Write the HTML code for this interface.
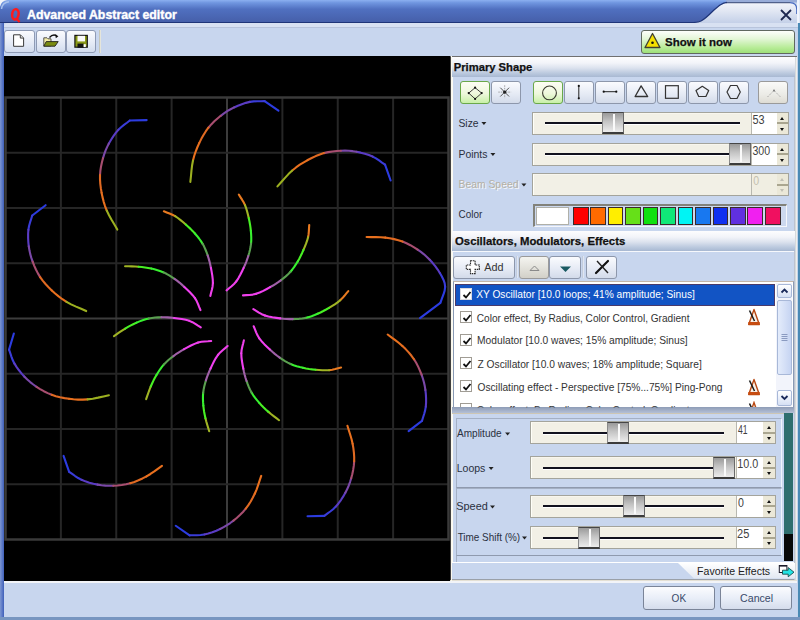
<!DOCTYPE html>
<html><head><meta charset="utf-8">
<style>
*{box-sizing:border-box}
html,body{margin:0;padding:0}
body{width:800px;height:620px;overflow:hidden;position:relative;background:#c8d6ee;font-family:"Liberation Sans",sans-serif;font-size:11px;color:#222}
.a{position:absolute}
#lframe{left:0;top:0;width:4px;height:620px;background:linear-gradient(90deg,#7d96d0 0,#5f7cc8 2px,#3f5fb8 4px)}
#bframe{left:0;top:617px;width:800px;height:3px;background:#7896c0}
#rframe{left:797px;top:23px;width:3px;height:597px;background:linear-gradient(90deg,#c4d4ec 0,#c4d4ec 1.5px,#4a8ab4 1.5px)}
#title{left:0;top:0;width:800px;height:23px}
.tb{position:absolute;top:30px;width:30px;height:23px;border:1px solid #8e9ab4;border-radius:3px;background:linear-gradient(#fafbfe,#e4eaf6 60%,#d2dcee)}
#canvas{left:4px;top:56px;width:446px;height:525px;background:#000}
#panel{left:450px;top:56px;width:347px;height:524px;background:#c8d6ee;border-left:1px solid #6a6a6a}
.hdr{position:absolute;left:451px;width:344px;height:20px;background:linear-gradient(#fdfdfe 0,#f2f4f9 30%,#dce2ee 55%,#bccadf 80%,#a8b8d2 100%);font-weight:bold;font-size:11.5px;color:#111;padding-left:3px;line-height:20px}
.btn{position:absolute;height:23px;width:30px;border:1px solid #8d97ab;border-radius:3px;background:linear-gradient(#fafbfe,#e6ebf5 55%,#d3dbea)}
.btn.sel{border-color:#6aa84a;background:linear-gradient(#fdfdf4,#eef8dc 55%,#c8f0a8)}
.btn.dis{background:linear-gradient(#fafaf8,#ebebe6 60%,#dedcd4);border-color:#9a9a9a}
.btn svg{position:absolute;left:0;top:0}
.lbl{position:absolute;font-size:11.5px;color:#2a2a3a;white-space:nowrap}
.lbl.dis{color:#a8aab8;text-shadow:1px 1px 0 #f4f6fb}
.dd{display:inline-block;width:0;height:0;border-left:3px solid transparent;border-right:3px solid transparent;border-top:3px solid #222;margin-left:3px;vertical-align:2px}
.lbl.dis .dd{border-top-color:#a8aab8}
.sbox{position:absolute;border:1px solid #a4a49c;background:#f2f0e6}
.strack-area{position:absolute;background:#f2f0e6;border-left:1px solid #fffff8;border-top:1px solid #f8f6ee}
.track{position:absolute;height:3px;background:#11111e;border-bottom:1px solid #fff}
.thumb{position:absolute;width:22px;height:22px;border-top:1.5px solid #464646;border-bottom:2px solid #3c3c3c;border-left:1px solid #8a8a8a;border-right:1px solid #6a6a6a;background:linear-gradient(#9a9a9a,#c4c4c4 45%,#ececec)}
.thumb i{position:absolute;left:9.5px;top:1px;width:2px;height:17px;background:#fafafa}
.field{position:absolute;background:#fff;border-left:1px solid #b8b8b0;font-size:12px;color:#3a3a3a;padding-left:2px;line-height:13px;padding-top:2px}
.field.dis{background:#f0eee2;color:#b8b8b0}
.spin{position:absolute;background:#ebe8d8}
.spin b{position:absolute;left:0;width:100%;height:50%}
.spin b.up{top:0;height:calc(50% + 1px);border-bottom:2px solid #aaa690}
.spin b.dn{top:calc(50% + 1px)}
.spin b.up:after,.spin b.dn:after{content:"";position:absolute;left:3.5px;border-left:2.5px solid transparent;border-right:2.5px solid transparent}
.spin b.up:after{top:4px;border-bottom:3px solid #111}
.spin b.dn:after{top:3.5px;border-top:3px solid #111}
.spin.dis b.up:after{border-bottom-color:#c0beb4}
.spin.dis b.dn:after{border-top-color:#c0beb4}
.sw{position:absolute;top:207.4px;width:15.7px;height:17.2px;border:1px solid #3a2a2a}
.row{position:absolute;left:455px;width:320px;height:23px;font-size:11.5px;color:#333;line-height:23px;padding-left:20px;white-space:nowrap}
.row.sel{background:#1254c4;color:#fff;border:1px solid #4a3a6a}
.row.sel .cb{left:3.5px;top:3.5px;border-color:#d8d8e0}
.cb{position:absolute;left:4.5px;top:4.5px;width:12px;height:12px;border:1px solid #a09c94;background:#fff}
.cb svg{position:absolute;left:1px;top:1px}
.okb{position:absolute;top:586px;height:24px;border:1px solid #7a8498;border-radius:3px;background:linear-gradient(#fbfcfe,#e9eef8 50%,#d5ddec);font-size:12.5px;color:#3a4a6a;text-align:center;line-height:22px}
</style></head><body>
<div class="a" id="lframe"></div>
<div class="a" id="rframe"></div>
<div class="a" id="bframe"></div>

<!-- title bar -->
<svg class="a" id="title" width="800" height="23" viewBox="0 0 800 23">
<defs>
<linearGradient id="tg" x1="0" y1="0" x2="0" y2="1">
<stop offset="0" stop-color="#8cb0f0"/><stop offset="0.12" stop-color="#7096e0"/><stop offset="0.4" stop-color="#5070c0"/><stop offset="1" stop-color="#455ea8"/>
</linearGradient>
<linearGradient id="tl" x1="0" y1="0" x2="0" y2="1">
<stop offset="0" stop-color="#f2f4fa"/><stop offset="0.35" stop-color="#e4e9f4"/><stop offset="1" stop-color="#c4d0e8"/>
</linearGradient>
</defs>
<rect x="0" y="0" width="800" height="23" fill="#c8d6ee"/>
<rect x="0" y="0" width="800" height="2.5" fill="#98acd8"/>
<path d="M690,23 L800,23 L800,0 L797,0 L797,23 Z" fill="#dfe8f6"/>
<path d="M726,2.6 L790,2.6 Q796.8,2.6 796.8,9.5 L796.8,23 L690,23 Z" fill="url(#tl)"/>
<path d="M726,2.6 L790,2.6" stroke="#50608a" stroke-width="1.1"/>
<path d="M790,2.6 Q796.8,2.6 796.8,9.5 L796.8,14" fill="none" stroke="#4a6cc0" stroke-width="1.3"/>
<path d="M798,0 L798,23" stroke="#f0f4fc" stroke-width="2"/>
<path d="M0,23 L0,7 Q0,0 9,0 L726,0 L726,2.4 C722,2.8 719,5.5 714,10 C709,15 705,19 701,21 C698,22.3 695,22.6 690,22.6 L0,22.6 Z" fill="url(#tg)"/>
<path d="M727,2.4 C722,2.8 719,5.5 714,10 C709,15 705,19 701,21 C698,22.3 695,22.6 690,22.6 L0,22.6" fill="none" stroke="#1f3578" stroke-width="1.2"/>
<path d="M0,0 L7,0 Q1.5,0.8 0,6.5 Z" fill="#f4f6fa"/><path d="M1.5,9 Q2.2,2.5 9,1.8" fill="none" stroke="#a8c0ec" stroke-width="1.4"/>
<ellipse cx="15.4" cy="14.3" rx="3.2" ry="5.2" fill="none" stroke="#ff1a1a" stroke-width="2.5" transform="rotate(8 15.4 14.3)"/><path d="M16.5,18.8 L19.6,22" stroke="#ff1a1a" stroke-width="2.2"/>
<path d="M781,10 L791,20 M791,10 L781,20" stroke="#1e2850" stroke-width="1.8"/>
</svg>

<!-- toolbar -->
<div class="a" style="left:4px;top:23px;width:794px;height:5px;background:#d8e1f2;border-bottom:1px solid #b8c4dc;border-top-left-radius:4px"></div>
<div class="tb" style="left:4px;top:30.3px;width:30.5px"><svg width="30" height="23"><path d="M8.6,3.8 L15.4,3.8 L18.6,7 L18.6,15.3 L8.6,15.3 Z" fill="#fff" stroke="#3a3a3a" stroke-width="1"/><path d="M15.3,4 L15.3,7.1 L18.4,7.1" fill="#d8d8d8" stroke="#3a3a3a" stroke-width="0.9"/></svg></div>
<div class="tb" style="left:35.5px;top:30.3px;width:30px"><svg width="30" height="23"><path d="M6.8,6.8 L10,6.8 L11,7.8 L14,7.8 L14,15 L6.8,15 Z" fill="#f4eca8" stroke="#444" stroke-width="0.9"/><path d="M9.2,10.6 L21.2,10.6 L18,15.2 L6.8,15.2 Z" fill="#7a8c12" stroke="#222" stroke-width="0.9"/><path d="M12.5,6.5 Q15.5,2.8 19.6,4.6" fill="none" stroke="#111" stroke-width="1.3"/><path d="M18.2,3.2 L21.4,5.2 L18.8,7.2 Z" fill="#111"/></svg></div>
<div class="tb" style="left:66px;top:30.3px;width:30px"><svg width="30" height="23"><rect x="7.3" y="3.8" width="13.6" height="13" fill="#141414"/><rect x="8.5" y="5" width="11.2" height="10.6" fill="#8a9a18"/><rect x="10.5" y="4.8" width="7.5" height="5.6" fill="#fafafa"/><rect x="10.5" y="12.6" width="6.2" height="4.2" fill="#141414"/><rect x="16.6" y="13.2" width="2.2" height="2.8" fill="#fff"/></svg></div>
<div class="a" style="left:98.5px;top:30px;width:2px;height:23px;background:linear-gradient(90deg,#b8b8a8,#f4f4ec)"></div>

<!-- show it now -->
<div class="a" style="left:640.5px;top:30px;width:154px;height:23.5px;border:1px solid #606860;border-radius:3px;background:linear-gradient(#fdfefb 0,#e4f6d8 35%,#b8ec98 75%,#9ee07a 100%)"></div>
<svg class="a" style="left:644px;top:32px" width="18" height="18"><path d="M8.5,1.5 L16,15.5 L1,15.5 Z" fill="#f4e000" stroke="#404030" stroke-width="1.3" stroke-linejoin="round"/><circle cx="8.5" cy="10.8" r="1.3" fill="#111"/></svg>

<!-- canvas -->
<div class="a" id="canvas"></div>
<svg class="a" style="left:0;top:0" width="450" height="580" viewBox="0 0 450 580">
<g><line x1="60.88" y1="97.5" x2="60.88" y2="539.5" stroke="#262626" stroke-width="2"/>
<line x1="116.25" y1="97.5" x2="116.25" y2="539.5" stroke="#262626" stroke-width="2"/>
<line x1="171.62" y1="97.5" x2="171.62" y2="539.5" stroke="#262626" stroke-width="2"/>
<line x1="227.00" y1="97.5" x2="227.00" y2="539.5" stroke="#3c3c3c" stroke-width="2"/>
<line x1="282.38" y1="97.5" x2="282.38" y2="539.5" stroke="#262626" stroke-width="2"/>
<line x1="337.75" y1="97.5" x2="337.75" y2="539.5" stroke="#262626" stroke-width="2"/>
<line x1="393.12" y1="97.5" x2="393.12" y2="539.5" stroke="#262626" stroke-width="2"/>
<line x1="5.5" y1="152.75" x2="448.5" y2="152.75" stroke="#262626" stroke-width="2"/>
<line x1="5.5" y1="208.00" x2="448.5" y2="208.00" stroke="#262626" stroke-width="2"/>
<line x1="5.5" y1="263.25" x2="448.5" y2="263.25" stroke="#262626" stroke-width="2"/>
<line x1="5.5" y1="318.50" x2="448.5" y2="318.50" stroke="#3c3c3c" stroke-width="2"/>
<line x1="5.5" y1="373.75" x2="448.5" y2="373.75" stroke="#262626" stroke-width="2"/>
<line x1="5.5" y1="429.00" x2="448.5" y2="429.00" stroke="#262626" stroke-width="2"/>
<line x1="5.5" y1="484.25" x2="448.5" y2="484.25" stroke="#262626" stroke-width="2"/>
<rect x="5.5" y="97.5" width="443.00" height="442.00" fill="none" stroke="#3a3a3a" stroke-width="2.5"/></g>
<g stroke-width="2.1" stroke-linecap="round" stroke-linejoin="round"><path d="M146.66,120.11 L129.84,120.53" stroke="#2c3ce0"/>
<path d="M129.84,120.53 L126.92,122.76 L123.97,124.91 L121.08,127.20 L118.35,129.84" stroke="#3a3cd8" fill="none"/>
<path d="M118.35,129.84 L115.75,132.94 L113.25,136.37 L110.93,139.96 L108.86,143.56" stroke="#5a3cc4" fill="none"/>
<path d="M108.86,143.56 L107.07,147.10 L105.52,150.68 L104.17,154.36 L102.99,158.19" stroke="#7a48a8" fill="none"/>
<path d="M102.99,158.19 L101.93,162.24 L101.04,166.45 L100.38,170.75 L100.02,175.07" stroke="#a84e70" fill="none"/>
<path d="M100.02,175.07 L100.01,179.42 L100.30,183.81 L100.84,188.24 L101.59,192.69" stroke="#e06a22" fill="none"/>
<path d="M101.59,192.69 L102.51,197.13 L103.63,201.57 L105.02,206.06 L106.78,210.62" stroke="#e8701e" fill="none"/>
<path d="M106.78,210.62 L109.03,215.29 L111.70,220.04 L114.54,224.83 L117.29,229.59" stroke="#9cb020" fill="none"/>
<path d="M278.46,110.66 L264.60,101.11" stroke="#2c3ce0"/>
<path d="M264.60,101.11 L260.93,101.20 L257.28,101.21 L253.59,101.36 L249.83,101.89" stroke="#3a3cd8" fill="none"/>
<path d="M249.83,101.89 L245.91,102.87 L241.88,104.18 L237.88,105.72 L234.09,107.42" stroke="#5a3cc4" fill="none"/>
<path d="M234.09,107.42 L230.56,109.23 L227.20,111.21 L223.95,113.39 L220.74,115.80" stroke="#7a48a8" fill="none"/>
<path d="M220.74,115.80 L217.51,118.45 L214.31,121.33 L211.25,124.42 L208.42,127.71" stroke="#a84e70" fill="none"/>
<path d="M208.42,127.71 L205.86,131.22 L203.50,134.95 L201.34,138.85 L199.33,142.89" stroke="#e06a22" fill="none"/>
<path d="M199.33,142.89 L197.47,147.01 L195.76,151.27 L194.25,155.72 L192.99,160.45" stroke="#e8701e" fill="none"/>
<path d="M192.99,160.45 L192.07,165.55 L191.44,170.96 L190.92,176.50 L190.34,181.97" stroke="#9cb020" fill="none"/>
<path d="M390.64,180.49 L385.04,164.61" stroke="#2c3ce0"/>
<path d="M385.04,164.61 L382.02,162.53 L379.06,160.39 L375.99,158.35 L372.64,156.57" stroke="#3a3cd8" fill="none"/>
<path d="M372.64,156.57 L368.89,155.05 L364.85,153.74 L360.71,152.64 L356.65,151.78" stroke="#5a3cc4" fill="none"/>
<path d="M356.65,151.78 L352.73,151.17 L348.85,150.80 L344.94,150.65 L340.92,150.72" stroke="#7a48a8" fill="none"/>
<path d="M340.92,150.72 L336.75,150.97 L332.47,151.42 L328.18,152.12 L323.95,153.11" stroke="#a84e70" fill="none"/>
<path d="M323.95,153.11 L319.82,154.45 L315.72,156.08 L311.68,157.96 L307.68,160.05" stroke="#e06a22" fill="none"/>
<path d="M307.68,160.05 L303.75,162.29 L299.87,164.73 L296.03,167.44 L292.23,170.53" stroke="#e8701e" fill="none"/>
<path d="M292.23,170.53 L288.49,174.11 L284.79,178.12 L281.12,182.29 L277.44,186.38" stroke="#9cb020" fill="none"/>
<path d="M420.00,318.20 L440.35,302.91" stroke="#2c3ce0"/>
<path d="M440.35,302.91 L441.79,298.83 L443.38,294.70 L444.66,290.65 L445.15,286.78" stroke="#2c3ce0" fill="none"/>
<path d="M445.15,286.78 L444.65,283.15 L443.43,279.70 L441.75,276.34 L439.85,272.98" stroke="#3a3cd8" fill="none"/>
<path d="M439.85,272.98 L437.70,269.55 L435.21,266.12 L432.51,262.80 L429.73,259.71" stroke="#5a3cc4" fill="none"/>
<path d="M429.73,259.71 L426.91,256.92 L423.99,254.33 L420.91,251.91 L417.63,249.61" stroke="#7a48a8" fill="none"/>
<path d="M417.63,249.61 L414.11,247.36 L410.38,245.20 L406.49,243.25 L402.49,241.57" stroke="#a84e70" fill="none"/>
<path d="M402.49,241.57 L398.36,240.22 L394.09,239.13 L389.71,238.27 L385.25,237.62" stroke="#e06a22" fill="none"/>
<path d="M385.25,237.62 L380.69,237.23 L376.01,237.11 L371.29,237.09 L366.59,237.01" stroke="#e8701e" fill="none"/>
<path d="M408.61,431.18 L421.97,420.94" stroke="#2c3ce0"/>
<path d="M421.97,420.94 L423.03,417.43 L424.15,413.96 L425.14,410.40 L425.80,406.67" stroke="#3a3cd8" fill="none"/>
<path d="M425.80,406.67 L426.08,402.63 L426.08,398.39 L425.85,394.11 L425.41,389.99" stroke="#5a3cc4" fill="none"/>
<path d="M425.41,389.99 L424.77,386.07 L423.93,382.26 L422.86,378.49 L421.56,374.70" stroke="#7a48a8" fill="none"/>
<path d="M421.56,374.70 L420.03,370.81 L418.28,366.88 L416.29,363.01 L414.04,359.30" stroke="#a84e70" fill="none"/>
<path d="M414.04,359.30 L411.49,355.78 L408.68,352.39 L405.64,349.12 L402.41,345.97" stroke="#e06a22" fill="none"/>
<path d="M402.41,345.97 L398.95,342.97 L395.24,340.12 L391.43,337.33 L387.67,334.51" stroke="#e8701e" fill="none"/>
<path d="M307.54,516.29 L324.36,515.87" stroke="#2c3ce0"/>
<path d="M324.36,515.87 L327.28,513.64 L330.23,511.49 L333.12,509.20 L335.85,506.56" stroke="#3a3cd8" fill="none"/>
<path d="M335.85,506.56 L338.45,503.46 L340.95,500.03 L343.27,496.44 L345.34,492.84" stroke="#5a3cc4" fill="none"/>
<path d="M345.34,492.84 L347.13,489.30 L348.68,485.72 L350.03,482.04 L351.21,478.21" stroke="#7a48a8" fill="none"/>
<path d="M351.21,478.21 L352.27,474.16 L353.16,469.95 L353.82,465.65 L354.18,461.33" stroke="#a84e70" fill="none"/>
<path d="M354.18,461.33 L354.19,456.98 L353.90,452.59 L353.36,448.16 L352.61,443.71" stroke="#e06a22" fill="none"/>
<path d="M352.61,443.71 L351.57,439.25 L350.24,434.76 L348.80,430.27 L347.42,425.78" stroke="#e8701e" fill="none"/>
<path d="M175.74,525.74 L189.60,535.29" stroke="#2c3ce0"/>
<path d="M189.60,535.29 L193.27,535.20 L196.92,535.19 L200.61,535.04 L204.37,534.51" stroke="#3a3cd8" fill="none"/>
<path d="M204.37,534.51 L208.29,533.53 L212.32,532.22 L216.32,530.68 L220.11,528.98" stroke="#5a3cc4" fill="none"/>
<path d="M220.11,528.98 L223.64,527.17 L227.00,525.19 L230.25,523.01 L233.46,520.60" stroke="#7a48a8" fill="none"/>
<path d="M233.46,520.60 L236.69,517.95 L239.89,515.07 L242.95,511.98 L245.78,508.69" stroke="#a84e70" fill="none"/>
<path d="M245.78,508.69 L248.34,505.18 L250.70,501.45 L252.86,497.55 L254.87,493.51" stroke="#e06a22" fill="none"/>
<path d="M254.87,493.51 L256.65,489.29 L258.21,484.88 L259.69,480.40 L261.21,475.95" stroke="#e8701e" fill="none"/>
<path d="M63.56,455.91 L69.16,471.79" stroke="#2c3ce0"/>
<path d="M69.16,471.79 L72.18,473.87 L75.14,476.01 L78.21,478.05 L81.56,479.83" stroke="#3a3cd8" fill="none"/>
<path d="M81.56,479.83 L85.31,481.35 L89.35,482.66 L93.49,483.76 L97.55,484.62" stroke="#5a3cc4" fill="none"/>
<path d="M97.55,484.62 L101.47,485.23 L105.35,485.60 L109.26,485.75 L113.28,485.68" stroke="#7a48a8" fill="none"/>
<path d="M113.28,485.68 L117.45,485.43 L121.73,484.98 L126.02,484.28 L130.25,483.29" stroke="#a84e70" fill="none"/>
<path d="M130.25,483.29 L134.38,481.95 L138.48,480.32 L142.52,478.44 L146.52,476.35" stroke="#e06a22" fill="none"/>
<path d="M146.52,476.35 L150.44,473.98 L154.29,471.34 L158.12,468.58 L161.97,465.87" stroke="#e8701e" fill="none"/>
<path d="M13.85,333.49 L9.05,349.62" stroke="#2c3ce0"/>
<path d="M9.05,349.62 L10.26,353.08 L11.40,356.55 L12.69,360.01 L14.35,363.42" stroke="#3a3cd8" fill="none"/>
<path d="M14.35,363.42 L16.50,366.85 L18.99,370.28 L21.69,373.60 L24.47,376.69" stroke="#5a3cc4" fill="none"/>
<path d="M24.47,376.69 L27.29,379.48 L30.21,382.07 L33.29,384.49 L36.57,386.79" stroke="#7a48a8" fill="none"/>
<path d="M36.57,386.79 L40.09,389.04 L43.82,391.20 L47.71,393.15 L51.71,394.83" stroke="#a84e70" fill="none"/>
<path d="M51.71,394.83 L55.84,396.18 L60.11,397.27 L64.49,398.13 L68.95,398.78" stroke="#e06a22" fill="none"/>
<path d="M68.95,398.78 L73.45,399.28 L78.02,399.59 L82.72,399.65 L87.61,399.39" stroke="#e8701e" fill="none"/>
<path d="M87.61,399.39 L92.74,398.69 L98.09,397.62 L103.51,396.40 L108.90,395.25" stroke="#9cb020" fill="none"/>
<path d="M45.59,205.22 L32.23,215.46" stroke="#2c3ce0"/>
<path d="M32.23,215.46 L31.17,218.97 L30.05,222.44 L29.06,226.00 L28.40,229.73" stroke="#3a3cd8" fill="none"/>
<path d="M28.40,229.73 L28.12,233.77 L28.12,238.01 L28.35,242.29 L28.79,246.41" stroke="#5a3cc4" fill="none"/>
<path d="M28.79,246.41 L29.43,250.33 L30.27,254.14 L31.34,257.91 L32.64,261.70" stroke="#7a48a8" fill="none"/>
<path d="M32.64,261.70 L34.17,265.59 L35.92,269.52 L37.91,273.39 L40.16,277.10" stroke="#a84e70" fill="none"/>
<path d="M40.16,277.10 L42.71,280.62 L45.52,284.01 L48.56,287.28 L51.79,290.43" stroke="#e06a22" fill="none"/>
<path d="M51.79,290.43 L55.14,293.48 L58.65,296.42 L62.42,299.23 L66.53,301.89" stroke="#e8701e" fill="none"/>
<path d="M66.53,301.89 L71.09,304.34 L76.05,306.62 L81.15,308.82 L86.18,311.06" stroke="#9cb020" fill="none"/>
<path d="M163.88,211.30 L166.70,212.44 L169.53,213.52 L172.35,214.72 L175.12,216.18" stroke="#e87a20" fill="none"/>
<path d="M175.12,216.18 L177.86,218.00 L180.58,220.09 L183.23,222.30 L185.78,224.51" stroke="#a0b424" fill="none"/>
<path d="M185.78,224.51 L188.20,226.68 L190.54,228.88 L192.78,231.15 L194.93,233.50" stroke="#48f024" fill="none"/>
<path d="M194.93,233.50 L197.02,235.96 L199.04,238.50 L200.94,241.12 L202.64,243.82" stroke="#38f030" fill="none"/>
<path d="M202.64,243.82 L204.13,246.61 L205.44,249.50 L206.60,252.45 L207.67,255.44" stroke="#5aa050" fill="none"/>
<path d="M207.67,255.44 L208.63,258.39 L209.47,261.36 L210.22,264.43 L210.90,267.74" stroke="#a060a8" fill="none"/>
<path d="M210.90,267.74 L211.59,271.41 L212.26,275.36 L212.75,279.32 L212.90,283.06" stroke="#f040f0" fill="none"/>
<path d="M212.90,283.06 L212.58,286.47 L211.90,289.69 L211.08,292.84 L210.33,296.03" stroke="#f040ec" fill="none"/>
<path d="M238.79,194.55 L240.40,197.13 L242.06,199.68 L243.63,202.30 L245.01,205.11" stroke="#e87a20" fill="none"/>
<path d="M245.01,205.11 L246.16,208.20 L247.13,211.48 L247.98,214.83 L248.74,218.11" stroke="#a0b424" fill="none"/>
<path d="M248.74,218.11 L249.43,221.30 L250.02,224.45 L250.50,227.60 L250.85,230.77" stroke="#48f024" fill="none"/>
<path d="M250.85,230.77 L251.10,233.99 L251.25,237.23 L251.24,240.46 L251.04,243.65" stroke="#38f030" fill="none"/>
<path d="M251.04,243.65 L250.60,246.79 L249.95,249.89 L249.16,252.96 L248.27,256.01" stroke="#5aa050" fill="none"/>
<path d="M248.27,256.01 L247.31,258.96 L246.25,261.85 L245.05,264.78 L243.65,267.85" stroke="#a060a8" fill="none"/>
<path d="M243.65,267.85 L242.06,271.23 L240.28,274.82 L238.34,278.31 L236.27,281.43" stroke="#f040f0" fill="none"/>
<path d="M236.27,281.43 L234.01,283.99 L231.56,286.20 L229.05,288.27 L226.57,290.41" stroke="#f040ec" fill="none"/>
<path d="M309.23,225.04 L309.02,228.07 L308.87,231.10 L308.60,234.15 L308.06,237.24" stroke="#e87a20" fill="none"/>
<path d="M308.06,237.24 L307.18,240.41 L306.04,243.64 L304.75,246.84 L303.44,249.95" stroke="#a0b424" fill="none"/>
<path d="M303.44,249.95 L302.12,252.93 L300.75,255.82 L299.29,258.66 L297.71,261.43" stroke="#48f024" fill="none"/>
<path d="M297.71,261.43 L296.02,264.18 L294.23,266.89 L292.33,269.50 L290.28,271.96" stroke="#38f030" fill="none"/>
<path d="M290.28,271.96 L288.08,274.24 L285.74,276.37 L283.29,278.39 L280.79,280.33" stroke="#5aa050" fill="none"/>
<path d="M280.79,280.33 L278.27,282.16 L275.71,283.87 L273.02,285.53 L270.09,287.20" stroke="#a060a8" fill="none"/>
<path d="M270.09,287.20 L266.81,288.99 L263.26,290.85 L259.64,292.54 L256.13,293.84" stroke="#f040f0" fill="none"/>
<path d="M256.13,293.84 L252.79,294.59 L249.52,294.94 L246.27,295.13 L243.01,295.40" stroke="#f040ec" fill="none"/>
<path d="M348.31,291.11 L346.35,293.44 L344.44,295.80 L342.44,298.11 L340.19,300.29" stroke="#e87a20" fill="none"/>
<path d="M340.19,300.29 L337.61,302.33 L334.79,304.27 L331.86,306.11 L328.98,307.85" stroke="#a0b424" fill="none"/>
<path d="M328.98,307.85 L326.16,309.49 L323.34,311.03 L320.50,312.46 L317.59,313.77" stroke="#48f024" fill="none"/>
<path d="M317.59,313.77 L314.61,315.01 L311.57,316.15 L308.50,317.14 L305.40,317.93" stroke="#38f030" fill="none"/>
<path d="M305.40,317.93 L302.28,318.48 L299.13,318.83 L295.96,319.02 L292.79,319.12" stroke="#5aa050" fill="none"/>
<path d="M292.79,319.12 L289.68,319.12 L286.61,319.00 L283.45,318.76 L280.10,318.39" stroke="#a060a8" fill="none"/>
<path d="M280.10,318.39 L276.39,317.91 L272.43,317.33 L268.51,316.57 L264.91,315.56" stroke="#f040f0" fill="none"/>
<path d="M264.91,315.56 L261.77,314.20 L258.91,312.56 L256.17,310.80 L253.37,309.10" stroke="#f040ec" fill="none"/>
<path d="M341.09,367.53 L338.13,368.26 L335.20,369.05 L332.22,369.74 L329.12,370.18" stroke="#e87a20" fill="none"/>
<path d="M329.12,370.18 L325.83,370.32 L322.41,370.23 L318.96,370.00 L315.60,369.71" stroke="#a0b424" fill="none"/>
<path d="M315.60,369.71 L312.36,369.38 L309.18,368.97 L306.04,368.45 L302.91,367.81" stroke="#48f024" fill="none"/>
<path d="M302.91,367.81 L299.77,367.05 L296.65,366.19 L293.57,365.18 L290.61,364.00" stroke="#38f030" fill="none"/>
<path d="M290.61,364.00 L287.76,362.61 L285.00,361.04 L282.33,359.34 L279.71,357.56" stroke="#5aa050" fill="none"/>
<path d="M279.71,357.56 L277.19,355.73 L274.77,353.83 L272.36,351.78 L269.87,349.50" stroke="#a060a8" fill="none"/>
<path d="M269.87,349.50 L267.15,346.94 L264.29,344.14 L261.56,341.22 L259.24,338.28" stroke="#f040f0" fill="none"/>
<path d="M259.24,338.28 L257.50,335.34 L256.15,332.33 L254.97,329.30 L253.70,326.28" stroke="#f040ec" fill="none"/>
<path d="M279.08,420.22 L276.38,418.15 L273.66,416.10 L270.98,414.02 L268.42,411.89" stroke="#a0b424" fill="none"/>
<path d="M268.42,411.89 L266.00,409.72 L263.66,407.52 L261.42,405.25 L259.27,402.90" stroke="#48f024" fill="none"/>
<path d="M259.27,402.90 L257.18,400.44 L255.16,397.90 L253.26,395.28 L251.56,392.58" stroke="#38f030" fill="none"/>
<path d="M251.56,392.58 L250.07,389.79 L248.76,386.90 L247.60,383.95 L246.53,380.96" stroke="#5aa050" fill="none"/>
<path d="M246.53,380.96 L245.57,378.01 L244.73,375.04 L243.98,371.97 L243.30,368.66" stroke="#a060a8" fill="none"/>
<path d="M243.30,368.66 L242.61,364.99 L241.94,361.04 L241.45,357.08 L241.30,353.34" stroke="#f040f0" fill="none"/>
<path d="M241.30,353.34 L241.62,349.93 L242.30,346.71 L243.12,343.56 L243.87,340.37" stroke="#f040ec" fill="none"/>
<path d="M209.19,431.29 L208.22,428.03 L207.22,424.77 L206.28,421.51 L205.46,418.29" stroke="#a0b424" fill="none"/>
<path d="M205.46,418.29 L204.77,415.10 L204.18,411.95 L203.70,408.80 L203.35,405.63" stroke="#48f024" fill="none"/>
<path d="M203.35,405.63 L203.10,402.41 L202.95,399.17 L202.96,395.94 L203.16,392.75" stroke="#38f030" fill="none"/>
<path d="M203.16,392.75 L203.60,389.61 L204.25,386.51 L205.04,383.44 L205.93,380.39" stroke="#5aa050" fill="none"/>
<path d="M205.93,380.39 L206.89,377.44 L207.95,374.55 L209.15,371.62 L210.55,368.55" stroke="#a060a8" fill="none"/>
<path d="M210.55,368.55 L212.14,365.17 L213.92,361.58 L215.86,358.09 L217.93,354.97" stroke="#f040f0" fill="none"/>
<path d="M217.93,354.97 L220.19,352.41 L222.64,350.20 L225.15,348.13 L227.63,345.99" stroke="#f040ec" fill="none"/>
<path d="M146.14,399.16 L147.27,395.96 L148.38,392.73 L149.53,389.54 L150.76,386.45" stroke="#a0b424" fill="none"/>
<path d="M150.76,386.45 L152.08,383.47 L153.45,380.58 L154.91,377.74 L156.49,374.97" stroke="#48f024" fill="none"/>
<path d="M156.49,374.97 L158.18,372.22 L159.97,369.51 L161.87,366.90 L163.92,364.44" stroke="#38f030" fill="none"/>
<path d="M163.92,364.44 L166.12,362.16 L168.46,360.03 L170.91,358.01 L173.41,356.07" stroke="#5aa050" fill="none"/>
<path d="M173.41,356.07 L175.93,354.24 L178.49,352.53 L181.18,350.87 L184.11,349.20" stroke="#a060a8" fill="none"/>
<path d="M184.11,349.20 L187.39,347.41 L190.94,345.55 L194.56,343.86 L198.07,342.56" stroke="#f040f0" fill="none"/>
<path d="M198.07,342.56 L201.41,341.81 L204.68,341.46 L207.93,341.27 L211.19,341.00" stroke="#f040ec" fill="none"/>
<path d="M114.01,336.11 L116.81,334.18 L119.61,332.23 L122.41,330.32 L125.22,328.55" stroke="#a0b424" fill="none"/>
<path d="M125.22,328.55 L128.04,326.91 L130.86,325.37 L133.70,323.94 L136.61,322.63" stroke="#48f024" fill="none"/>
<path d="M136.61,322.63 L139.59,321.39 L142.63,320.25 L145.70,319.26 L148.80,318.47" stroke="#38f030" fill="none"/>
<path d="M148.80,318.47 L151.92,317.92 L155.07,317.57 L158.24,317.38 L161.41,317.28" stroke="#5aa050" fill="none"/>
<path d="M161.41,317.28 L164.52,317.28 L167.59,317.40 L170.75,317.64 L174.10,318.01" stroke="#a060a8" fill="none"/>
<path d="M174.10,318.01 L177.81,318.49 L181.77,319.07 L185.69,319.83 L189.29,320.84" stroke="#f040f0" fill="none"/>
<path d="M189.29,320.84 L192.43,322.20 L195.29,323.84 L198.03,325.60 L200.83,327.30" stroke="#f040ec" fill="none"/>
<path d="M125.08,266.22 L128.48,266.30 L131.89,266.37 L135.28,266.47 L138.60,266.69" stroke="#a0b424" fill="none"/>
<path d="M138.60,266.69 L141.84,267.02 L145.02,267.43 L148.16,267.95 L151.29,268.59" stroke="#48f024" fill="none"/>
<path d="M151.29,268.59 L154.43,269.35 L157.55,270.21 L160.63,271.22 L163.59,272.40" stroke="#38f030" fill="none"/>
<path d="M163.59,272.40 L166.44,273.79 L169.20,275.36 L171.87,277.06 L174.49,278.84" stroke="#5aa050" fill="none"/>
<path d="M174.49,278.84 L177.01,280.67 L179.43,282.57 L181.84,284.62 L184.33,286.90" stroke="#a060a8" fill="none"/>
<path d="M184.33,286.90 L187.05,289.46 L189.91,292.26 L192.64,295.18 L194.96,298.12" stroke="#f040f0" fill="none"/>
<path d="M194.96,298.12 L196.70,301.06 L198.05,304.07 L199.23,307.10 L200.50,310.12" stroke="#f040ec" fill="none"/></g>
</svg>

<!-- right panel -->
<div class="a" id="panel"></div>
<div class="a" style="left:450px;top:56px;width:1px;height:524px;background:#404040"></div>
<div class="a" style="left:451px;top:56px;width:2px;height:524px;background:#fbfaf2"></div>
<div class="a" style="left:794px;top:56px;width:3px;height:524px;background:linear-gradient(90deg,#b0b8c8,#fbfaf2)"></div>
<div class="a" style="left:450px;top:56px;width:347px;height:1px;background:#707070"></div>
<div class="hdr" style="top:57px"></div>

<div class="btn sel" style="left:459.5px;top:80.5px"><svg width="30" height="23"><path d="M14.1,5.7 L20.7,11.1 L14.1,16.9 L7.7,11.1 Z" fill="none" stroke="#2a2a2a" stroke-width="0.9"/><circle cx="14.1" cy="5.7" r="1.1" fill="#111"/><circle cx="20.7" cy="11.1" r="1.1" fill="#111"/><circle cx="14.1" cy="16.9" r="1.1" fill="#111"/><circle cx="7.7" cy="11.1" r="1.1" fill="#111"/></svg></div>
<div class="btn" style="left:490.5px;top:80.5px"><svg width="30" height="23"><path d="M8.3,5.7 L17.1,14.5 M17.1,5.7 L8.3,14.5" stroke="#555" stroke-width="1"/><path d="M6.3,10.1 L19.1,10.1 M12.7,3.3 L12.7,16.1" stroke="#999" stroke-width="0.9" stroke-dasharray="1.5 1"/><circle cx="12.7" cy="10.1" r="1.7" fill="#222"/></svg></div>
<div class="btn sel" style="left:532.5px;top:80.5px"><svg width="30" height="23"><circle cx="15.5" cy="10.9" r="6.9" fill="none" stroke="#3a3a30" stroke-width="1.1"/></svg></div>
<div class="btn" style="left:563.5px;top:80.5px"><svg width="30" height="23"><path d="M13.8,3.9 L13.8,16.3" stroke="#222" stroke-width="1"/><circle cx="13.8" cy="3.9" r="1.1" fill="#111"/><circle cx="13.8" cy="16.3" r="1.1" fill="#111"/></svg></div>
<div class="btn" style="left:594.5px;top:80.5px"><svg width="30" height="23"><path d="M7.7,9.7 L20.3,9.7" stroke="#222" stroke-width="1"/><circle cx="7.7" cy="9.7" r="1.1" fill="#111"/><circle cx="20.3" cy="9.7" r="1.1" fill="#111"/></svg></div>
<div class="btn" style="left:625.5px;top:80.5px"><svg width="30" height="23"><path d="M14.1,3.9 L20.7,14.5 L8.1,14.5 Z" fill="none" stroke="#333" stroke-width="1.3" stroke-linejoin="round"/></svg></div>
<div class="btn" style="left:656.5px;top:80.5px"><svg width="30" height="23"><rect x="7.5" y="3.7" width="12.8" height="12.6" fill="none" stroke="#333" stroke-width="1.2"/></svg></div>
<div class="btn" style="left:687.5px;top:80.5px"><svg width="30" height="23"><path d="M13.3,4.3 L19.7,8.5 L16.9,14.5 L9.7,14.5 L7,8.5 Z" fill="none" stroke="#333" stroke-width="1.2" stroke-linejoin="round"/></svg></div>
<div class="btn" style="left:718.5px;top:80.5px"><svg width="30" height="23"><path d="M10.5,3.5 L17,3.5 L20.3,10 L17,16.5 L10.5,16.5 L7,10 Z" fill="none" stroke="#333" stroke-width="1.2" stroke-linejoin="round"/></svg></div>
<div class="btn dis" style="left:757.5px;top:80.5px"><svg width="30" height="23"><path d="M8.5,15 L15,8.5 L21.5,15" fill="none" stroke="#9a9a9a" stroke-width="1" stroke-dasharray="1.2 1.3"/><circle cx="15" cy="8.5" r="1" fill="#777"/></svg></div>

<div class="sbox" style="left:532px;top:111.5px;width:257px;height:23px"></div>
<div class="strack-area" style="left:533px;top:112.5px;width:218.0px;height:21px"></div>
<div class="track" style="left:545px;top:122.0px;width:194.5px"></div>
<div class="thumb" style="left:602px;top:112.0px"><i></i></div>
<div class="field" style="left:751.0px;top:112.5px;width:25.5px;height:21px"></div>
<div class="spin" style="left:776.5px;top:112.5px;width:11.5px;height:21px"><b class="up"></b><b class="dn"></b></div>
<div class="sbox" style="left:532px;top:142.5px;width:257px;height:23px"></div>
<div class="strack-area" style="left:533px;top:143.5px;width:218.0px;height:21px"></div>
<div class="track" style="left:545px;top:153.0px;width:194.5px"></div>
<div class="thumb" style="left:729px;top:143.0px"><i></i></div>
<div class="field" style="left:751.0px;top:143.5px;width:25.5px;height:21px"></div>
<div class="spin" style="left:776.5px;top:143.5px;width:11.5px;height:21px"><b class="up"></b><b class="dn"></b></div>
<div class="sbox" style="left:532px;top:173px;width:257px;height:23px"></div>
<div class="strack-area" style="left:533px;top:174px;width:218.0px;height:21px"></div>
<div class="field dis" style="left:751.0px;top:174px;width:25.5px;height:21px"></div>
<div class="spin dis" style="left:776.5px;top:174px;width:11.5px;height:21px"><b class="up"></b><b class="dn"></b></div>

<div class="a" style="left:533px;top:204.4px;width:254px;height:22.6px;border-top:2px solid #82827a;border-left:2px solid #82827a;border-right:1px solid #f4f6fb;border-bottom:1px solid #f4f6fb;background:#ccd8ee"></div>
<div class="a" style="left:535.7px;top:207.4px;width:33.7px;height:18px;background:#fff;border:1px solid #b0b0a8"></div>
<div class="sw" style="left:572.90px;background:#ff0000"></div>
<div class="sw" style="left:590.35px;background:#ff6a00"></div>
<div class="sw" style="left:607.80px;background:#ffee00"></div>
<div class="sw" style="left:625.25px;background:#66e018"></div>
<div class="sw" style="left:642.70px;background:#10e010"></div>
<div class="sw" style="left:660.15px;background:#10e878"></div>
<div class="sw" style="left:677.60px;background:#00f4f4"></div>
<div class="sw" style="left:695.05px;background:#1878f0"></div>
<div class="sw" style="left:712.50px;background:#1030f0"></div>
<div class="sw" style="left:729.95px;background:#6030e0"></div>
<div class="sw" style="left:747.40px;background:#f020f0"></div>
<div class="sw" style="left:764.85px;background:#f01060"></div>

<div class="hdr" style="top:231px"></div><div class="a" style="left:451px;top:251px;width:343px;height:1.2px;background:#f6f8fc"></div>

<!-- effect toolbar -->
<div class="btn" style="left:452.5px;top:255.5px;width:62px"><svg width="62" height="23"><path d="M16.5,3.8 L21.1,3.8 L21.1,8 L25.3,8 L25.3,12.4 L21.1,12.4 L21.1,16.6 L16.5,16.6 L16.5,12.4 L12.3,12.4 L12.3,8 L16.5,8 Z" fill="#fff" stroke="#2a2a2a" stroke-width="1.1" stroke-dasharray="1.6 0.7"/></svg></div>
<div class="a" style="left:516px;top:256px;width:2px;height:22px;background:linear-gradient(90deg,#b4c0d4,#eef2fa)"></div>
<div class="btn dis" style="left:519px;top:255.5px;width:30px;background:linear-gradient(#f4f4f0,#e0dfd8 60%,#d2d0c8)"><svg width="30" height="23"><path d="M10,13.5 L14.5,9 L19,13.5 Z" fill="none" stroke="#8a8a8a" stroke-width="1"/></svg></div>
<div class="btn" style="left:549px;top:255.5px;width:31.5px"><svg width="31" height="23"><path d="M10,9.5 L21,9.5 L15.5,15 Z" fill="#1a5a62"/></svg></div>
<div class="a" style="left:582px;top:256px;width:2px;height:22px;background:linear-gradient(90deg,#b4c0d4,#eef2fa)"></div>
<div class="btn" style="left:585.5px;top:255.5px;width:31px"><svg width="31" height="23"><path d="M21,4 L9,16" stroke="#111" stroke-width="2.2" stroke-linecap="round"/><path d="M10,4 L21,16" stroke="#222" stroke-width="1.4"/></svg></div>

<!-- list -->
<div class="a" style="left:452.5px;top:280.5px;width:341px;height:127px;border:1px solid #8a9ab4;border-top-color:#c4b6a8;background:#fff"></div>
<div class="row sel" style="top:283.5px;width:319.5px;height:22px"><span class="cb"><svg width="10" height="10"><path d="M1.5,5 L4,7.5 L8.5,2" fill="none" stroke="#111" stroke-width="1.8"/></svg></span></div>
<div class="row" style="top:306.5px"><span class="cb"><svg width="10" height="10"><path d="M1.5,5 L4,7.5 L8.5,2" fill="none" stroke="#111" stroke-width="1.8"/></svg></span></div>
<div class="row" style="top:329.5px"><span class="cb"><svg width="10" height="10"><path d="M1.5,5 L4,7.5 L8.5,2" fill="none" stroke="#111" stroke-width="1.8"/></svg></span></div>
<div class="row" style="top:352.5px"><span class="cb"><svg width="10" height="10"><path d="M1.5,5 L4,7.5 L8.5,2" fill="none" stroke="#111" stroke-width="1.8"/></svg></span></div>
<div class="row" style="top:375.5px"><span class="cb"><svg width="10" height="10"><path d="M1.5,5 L4,7.5 L8.5,2" fill="none" stroke="#111" stroke-width="1.8"/></svg></span></div>
<div class="a" style="left:455px;top:398.5px;width:320px;height:9px;overflow:hidden"><div class="row" style="left:0;top:0"><span class="cb"></span></div></div>
<svg class="a" style="left:746px;top:308px" width="16" height="18"><path d="M8,1.5 L13.3,16.5 L2.7,16.5 Z" fill="#f8efe6" stroke="#b84812" stroke-width="1.4" stroke-linejoin="round"/><rect x="2.3" y="14" width="11.4" height="2.8" fill="#c84c10"/><path d="M3.5,2.5 L8.5,13" stroke="#1a1a1a" stroke-width="1.5"/></svg>
<svg class="a" style="left:746px;top:378px" width="16" height="18"><path d="M8,1.5 L13.3,16.5 L2.7,16.5 Z" fill="#f8efe6" stroke="#b84812" stroke-width="1.4" stroke-linejoin="round"/><rect x="2.3" y="14" width="11.4" height="2.8" fill="#c84c10"/><path d="M3.5,2.5 L8.5,13" stroke="#1a1a1a" stroke-width="1.5"/></svg>
<svg class="a" style="left:746px;top:401px" width="16" height="6.5"><path d="M8,1.5 L13.3,16.5 L2.7,16.5 Z" fill="#f8efe6" stroke="#b84812" stroke-width="1.4"/><path d="M3.5,2.5 L8.5,13" stroke="#1a1a1a" stroke-width="1.5"/></svg>
<!-- scrollbar -->
<div class="a" style="left:776px;top:282.5px;width:16px;height:125px;background:#f2f4fb"></div>
<div class="a" style="left:776.5px;top:284px;width:15px;height:14px;border:1px solid #a8b8d8;border-radius:2px;background:linear-gradient(#fff,#d6e0f4)"><svg width="13" height="12" style="position:absolute;left:0;top:0"><path d="M3.5,7.5 L6.5,4.5 L9.5,7.5" fill="none" stroke="#1a2a5a" stroke-width="1.8"/></svg></div>
<div class="a" style="left:776.5px;top:299.5px;width:15px;height:75px;border:1px solid #a8b8d8;border-radius:2px;background:linear-gradient(90deg,#e4ecfb,#c6d4f2)"><svg width="13" height="73" style="position:absolute;left:0;top:0"><path d="M3.5,33.5 L9.5,33.5 M3.5,35.5 L9.5,35.5 M3.5,37.5 L9.5,37.5 M3.5,39.5 L9.5,39.5" stroke="#8a9ac0" stroke-width="1"/></svg></div>
<div class="a" style="left:776.5px;top:390px;width:15px;height:15.5px;border:1px solid #a8b8d8;border-radius:2px;background:linear-gradient(#fff,#d6e0f4)"><svg width="13" height="13" style="position:absolute;left:0;top:0"><path d="M3.5,5 L6.5,8 L9.5,5" fill="none" stroke="#1a2a5a" stroke-width="1.8"/></svg></div>

<!-- lower panel -->
<div class="a" style="left:451px;top:407px;width:343px;height:5.5px;background:linear-gradient(#8e9cb6,#b4c0d6)"></div><div class="a" style="left:451px;top:412.5px;width:333px;height:1px;background:#cdc6b4"></div>
<div class="a" style="left:456px;top:418px;width:326px;height:70px;border:1px solid #a4b0c4;border-right-color:#f0f4fb;border-bottom-color:#8f9aae"></div>
<div class="a" style="left:456px;top:488px;width:326px;height:68px;border:1px solid #a4b0c4;border-right-color:#f0f4fb;border-bottom-color:#8f9aae"></div>
<div class="a" style="left:784px;top:413px;width:9px;height:121px;background:#2e6e6e"></div>
<div class="a" style="left:784px;top:534px;width:9px;height:27px;background:#080808"></div>


<div class="sbox" style="left:530px;top:421px;width:246px;height:23px"></div>
<div class="strack-area" style="left:531px;top:422px;width:204.8px;height:21px"></div>
<div class="track" style="left:543px;top:431.5px;width:181.3px"></div>
<div class="thumb" style="left:607px;top:421.5px"><i></i></div>
<div class="field" style="left:735.8px;top:422px;width:27.2px;height:21px"></div>
<div class="spin" style="left:763.0px;top:422px;width:12px;height:21px"><b class="up"></b><b class="dn"></b></div>
<div class="sbox" style="left:530px;top:456px;width:246px;height:23px"></div>
<div class="strack-area" style="left:531px;top:457px;width:204.8px;height:21px"></div>
<div class="track" style="left:543px;top:466.5px;width:181.3px"></div>
<div class="thumb" style="left:713px;top:456.5px"><i></i></div>
<div class="field" style="left:735.8px;top:457px;width:27.2px;height:21px"></div>
<div class="spin" style="left:763.0px;top:457px;width:12px;height:21px"><b class="up"></b><b class="dn"></b></div>
<div class="sbox" style="left:530px;top:494.5px;width:246px;height:23px"></div>
<div class="strack-area" style="left:531px;top:495.5px;width:204.8px;height:21px"></div>
<div class="track" style="left:543px;top:505.0px;width:181.3px"></div>
<div class="thumb" style="left:623px;top:495.0px"><i></i></div>
<div class="field" style="left:735.8px;top:495.5px;width:27.2px;height:21px"></div>
<div class="spin" style="left:763.0px;top:495.5px;width:12px;height:21px"><b class="up"></b><b class="dn"></b></div>
<div class="sbox" style="left:530px;top:526px;width:246px;height:23px"></div>
<div class="strack-area" style="left:531px;top:527px;width:204.8px;height:21px"></div>
<div class="track" style="left:543px;top:536.5px;width:181.3px"></div>
<div class="thumb" style="left:578px;top:526.5px"><i></i></div>
<div class="field" style="left:735.8px;top:527px;width:27.2px;height:21px"></div>
<div class="spin" style="left:763.0px;top:527px;width:12px;height:21px"><b class="up"></b><b class="dn"></b></div>

<div class="a" style="left:456px;top:556px;width:1px;height:6px;background:#a4b0c4"></div>
<div class="a" style="left:451px;top:562px;width:343px;height:17.5px;background:#c8d6ee;border-top:1px solid #fff;border-bottom:1px solid #9aa0a8"></div>
<div class="a" style="left:450px;top:579.5px;width:347px;height:2px;background:#e4e0d4"></div>
<div class="a" style="left:4px;top:581px;width:793px;height:1.5px;background:#f2f4f8"></div>
<div class="a" style="left:450.5px;top:56px;width:1.8px;height:525px;background:#faf8ee"></div>
<svg class="a" style="left:678px;top:563px" width="117" height="16"><defs><linearGradient id="fg" x1="0" y1="0" x2="0" y2="1"><stop offset="0" stop-color="#ffffff"/><stop offset="1" stop-color="#e2e8f2"/></linearGradient></defs><path d="M0,0 L117,0 L117,15.5 L16,15.5 Z" fill="url(#fg)"/></svg>
<svg class="a" style="left:778px;top:564px" width="17" height="15"><rect x="1.3" y="1.5" width="7.6" height="7" fill="#fff" stroke="#1a1a2a" stroke-width="1"/><rect x="1.3" y="1" width="7.6" height="1.6" fill="#1a1a2a"/><path d="M4.5,6.2 L10.2,6.2 L10.2,3.6 L16,8.2 L10.2,12.8 L10.2,10.2 L4.5,10.2 Z" fill="#22e4e4" stroke="#0a3a3a" stroke-width="0.8" stroke-linejoin="round"/></svg>

<!-- bottom buttons -->
<div class="okb" style="left:642.5px;width:72px"></div>
<div class="okb" style="left:720px;width:72px"></div>
<svg class="a" style="left:0;top:0" width="800" height="620" viewBox="0 0 800 620">
<defs><clipPath id="r6c"><rect x="450" y="398" width="330" height="9.5"/></clipPath></defs>
<text x="27.00" y="19" font-family="Liberation Sans" font-size="13" font-weight="bold" fill="#ffffff" textLength="149.75" lengthAdjust="spacingAndGlyphs" stroke="#ffffff" stroke-width="0.4">Advanced Abstract editor</text>
<text x="665.00" y="45.8" font-family="Liberation Sans" font-size="11.7" font-weight="bold" fill="#111111" textLength="66.87" lengthAdjust="spacingAndGlyphs" stroke="#111111" stroke-width="0.25">Show it now</text>
<text x="453.73" y="71.25" font-family="Liberation Sans" font-size="11" font-weight="bold" fill="#111111" textLength="78.57" lengthAdjust="spacingAndGlyphs" stroke="#111111" stroke-width="0.25">Primary Shape</text>
<text x="458.46" y="126.5" font-family="Liberation Sans" font-size="11" font-weight="normal" fill="#2a3040" textLength="20.12" lengthAdjust="spacingAndGlyphs">Size</text>
<text x="458.45" y="157.5" font-family="Liberation Sans" font-size="11" font-weight="normal" fill="#2a3040" textLength="29.00" lengthAdjust="spacingAndGlyphs">Points</text>
<text x="459.46" y="189.1" font-family="Liberation Sans" font-size="11" font-weight="normal" fill="#f6f8fc" textLength="60.02" lengthAdjust="spacingAndGlyphs">Beam Speed</text>
<text x="458.46" y="188.1" font-family="Liberation Sans" font-size="11" font-weight="normal" fill="#b4b0a4" textLength="60.02" lengthAdjust="spacingAndGlyphs">Beam Speed</text>
<text x="458.50" y="218.1" font-family="Liberation Sans" font-size="11" font-weight="normal" fill="#2a3040" textLength="23.77" lengthAdjust="spacingAndGlyphs">Color</text>
<text x="752.39" y="123.9" font-family="Liberation Sans" font-size="12" font-weight="normal" fill="#404040" textLength="12.13" lengthAdjust="spacingAndGlyphs">53</text>
<text x="752.42" y="154.7" font-family="Liberation Sans" font-size="12" font-weight="normal" fill="#404040" textLength="17.71" lengthAdjust="spacingAndGlyphs">300</text>
<text x="753.30" y="185.2" font-family="Liberation Sans" font-size="12" font-weight="normal" fill="#c4c0b0" textLength="5.91" lengthAdjust="spacingAndGlyphs">0</text>
<text x="455.00" y="245.3" font-family="Liberation Sans" font-size="11" font-weight="bold" fill="#111111" textLength="170.25" lengthAdjust="spacingAndGlyphs" stroke="#111111" stroke-width="0.25">Oscillators, Modulators, Effects</text>
<text x="484.20" y="270.9" font-family="Liberation Sans" font-size="11" font-weight="normal" fill="#333333" textLength="19.27" lengthAdjust="spacingAndGlyphs">Add</text>
<text x="476.17" y="298.4" font-family="Liberation Sans" font-size="11" font-weight="normal" fill="#ffffff" textLength="218.68" lengthAdjust="spacingAndGlyphs">XY Oscillator [10.0 loops; 41% amplitude; Sinus]</text>
<text x="476.78" y="321.6" font-family="Liberation Sans" font-size="11" font-weight="normal" fill="#333333" textLength="212.77" lengthAdjust="spacingAndGlyphs">Color effect, By Radius, Color Control, Gradient</text>
<text x="477.07" y="344.4" font-family="Liberation Sans" font-size="11" font-weight="normal" fill="#333333" textLength="210.56" lengthAdjust="spacingAndGlyphs">Modulator [10.0 waves; 15% amplitude; Sinus]</text>
<text x="477.50" y="367.6" font-family="Liberation Sans" font-size="11" font-weight="normal" fill="#333333" textLength="224.24" lengthAdjust="spacingAndGlyphs">Z Oscillator [10.0 waves; 18% amplitude; Square]</text>
<text x="477.50" y="390.5" font-family="Liberation Sans" font-size="11" font-weight="normal" fill="#333333" textLength="245.01" lengthAdjust="spacingAndGlyphs">Oscillating effect - Perspective [75%...75%] Ping-Pong</text>
<text x="476.78" y="413.6" font-family="Liberation Sans" font-size="11" font-weight="normal" fill="#333333" textLength="212.77" lengthAdjust="spacingAndGlyphs" clip-path="url(#r6c)">Color effect, By Radius, Color Control, Gradient</text>
<text x="457.00" y="436.9" font-family="Liberation Sans" font-size="11" font-weight="normal" fill="#2a3040" textLength="44.63" lengthAdjust="spacingAndGlyphs">Amplitude</text>
<text x="456.74" y="471.5" font-family="Liberation Sans" font-size="11" font-weight="normal" fill="#2a3040" textLength="28.64" lengthAdjust="spacingAndGlyphs">Loops</text>
<text x="456.21" y="509.9" font-family="Liberation Sans" font-size="11" font-weight="normal" fill="#2a3040" textLength="31.60" lengthAdjust="spacingAndGlyphs">Speed</text>
<text x="457.70" y="541.1" font-family="Liberation Sans" font-size="11" font-weight="normal" fill="#2a3040" textLength="62.34" lengthAdjust="spacingAndGlyphs">Time Shift (%)</text>
<text x="738.00" y="433.5" font-family="Liberation Sans" font-size="12" font-weight="normal" fill="#404040" textLength="9.56" lengthAdjust="spacingAndGlyphs">41</text>
<text x="737.30" y="468.3" font-family="Liberation Sans" font-size="12" font-weight="normal" fill="#404040" textLength="20.92" lengthAdjust="spacingAndGlyphs">10.0</text>
<text x="738.00" y="506.9" font-family="Liberation Sans" font-size="12" font-weight="normal" fill="#404040" textLength="5.91" lengthAdjust="spacingAndGlyphs">0</text>
<text x="737.08" y="538" font-family="Liberation Sans" font-size="12" font-weight="normal" fill="#404040" textLength="12.25" lengthAdjust="spacingAndGlyphs">25</text>
<text x="697.08" y="574.5" font-family="Liberation Sans" font-size="11.5" font-weight="normal" fill="#222222" textLength="73.05" lengthAdjust="spacingAndGlyphs">Favorite Effects</text>
<text x="671.60" y="601.6" font-family="Liberation Sans" font-size="11.5" font-weight="normal" fill="#3a4a6a" textLength="14.55" lengthAdjust="spacingAndGlyphs">OK</text>
<text x="740.08" y="601.6" font-family="Liberation Sans" font-size="11.5" font-weight="normal" fill="#3a4a6a" textLength="33.07" lengthAdjust="spacingAndGlyphs">Cancel</text>
<path d="M481.4,122.0 L486.4,122.0 L483.9,125.0 Z" fill="#222"/>
<path d="M490.4,153.0 L495.4,153.0 L492.9,156.0 Z" fill="#222"/>
<path d="M521.4,183.6 L526.4,183.6 L523.9,186.6 Z" fill="#222"/>
<path d="M505.1,432.4 L510.1,432.4 L507.6,435.4 Z" fill="#222"/>
<path d="M488.6,467.0 L493.6,467.0 L491.1,470.0 Z" fill="#222"/>
<path d="M490,505.4 L495,505.4 L492.5,508.4 Z" fill="#222"/>
<path d="M522,536.6 L527,536.6 L524.5,539.6 Z" fill="#222"/>
</svg>
</body></html>
